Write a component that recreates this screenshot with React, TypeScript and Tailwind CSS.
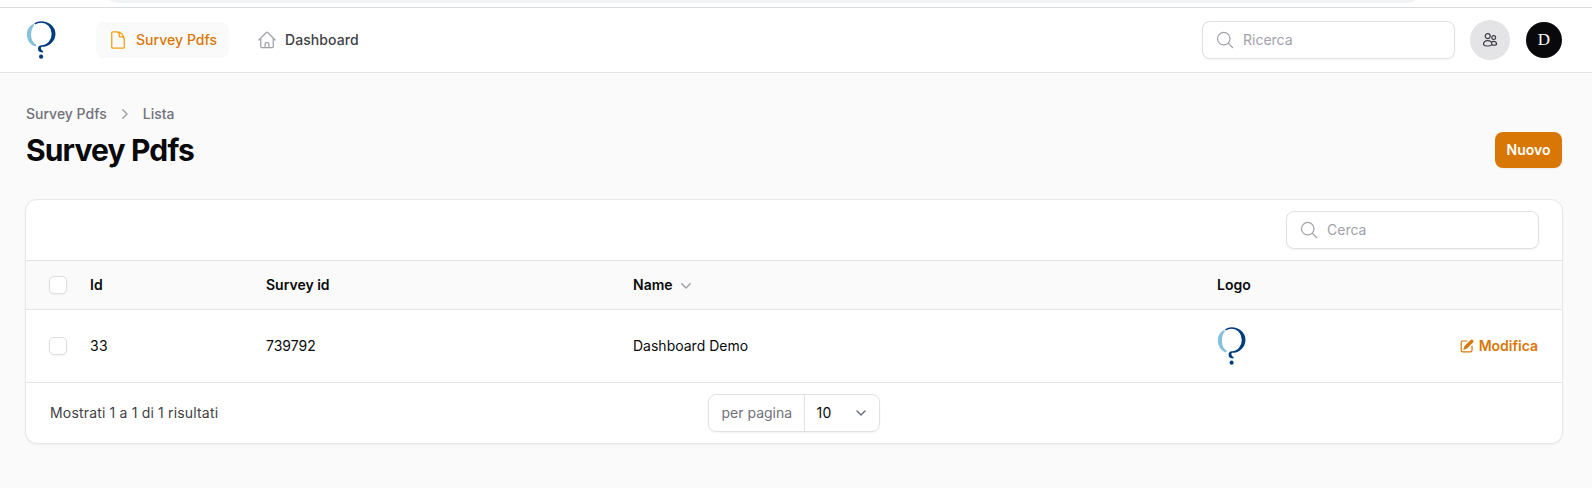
import React from "react";
import {
  HiOutlineDocument,
  HiOutlineHome,
  HiOutlineMagnifyingGlass,
  HiMiniChevronDown,
  HiMiniChevronRight,
  HiMiniPencilSquare,
} from "react-icons/hi2";

function Logo({ className }: { className: string }) {
  return (
    <svg viewBox="0 0 30 40" preserveAspectRatio="none" className={`h-10 shrink-0 ${className}`}>
      <path
        d="M7.5 3.800C3.300 6 .9 9.800.9 14.400c0 5.600 3.200 10.100 8.600 12.200l.6-1.900C6.800 22.800 5.100 19.200 5.100 14.700c0-3.900 1-7.200 3-9.300z"
        fill="#84c1dc"
      />
      <path
        d="M8.400 3.200Q11.500 1.200 15 1.200A14.200 12.800 0 0 1 15.500 26.800Q14.800 27.200 14.900 28.600Q15.200 30.500 17 31V32.400Q12 32.800 12 28.600Q12 25.300 15.500 25.200A10.400 11.250 0 0 0 15 2.700Q12 2.700 9 4.600Z"
        fill="#003c80"
      />
      <circle cx="15.100" cy="36.700" r="2.100" fill="#003c80" />
    </svg>
  );
}

function PeopleIcon() {
  return (
    <svg viewBox="0 0 16 16" className="size-4" fill="none" stroke="currentColor" strokeWidth="1.200">
      <circle cx="5.700" cy="4.100" r="2.500" />
      <circle cx="11.700" cy="5.600" r="1.900" />
      <path
        d="M1.500 12.600C1.500 10.200 3.300 8.600 5.700 8.600s4.200 1.600 4.200 4C9.200 13.500 7.500 14 5.700 14s-3.500-.5-4.200-1.400zM9.900 13c1.800.4 3.500.1 4.700-.6 0-1.800-1.200-3-2.900-3-1 0-1.900.4-2.500 1.100"
        strokeLinejoin="round"
      />
    </svg>
  );
}

function SearchField({ label }: { label: string }) {
  return (
    <label className="flex h-[38px] w-[253px] items-center rounded-lg border border-[#e1e1e3] bg-white pl-3 shadow-xs">
      <HiOutlineMagnifyingGlass className="size-5 shrink-0 text-[#a1a1aa]" />
      <input
        type="text"
        placeholder={label}
        className="w-full bg-transparent pl-2 text-sm outline-none placeholder:text-[#a1a1aa]"
      />
    </label>
  );
}

function Checkbox() {
  return <span className="block size-[18px] rounded-[5px] border border-[#dedee0] bg-white shadow-xs" />;
}

const columns = "grid grid-cols-[64px_176px_367px_584px_1fr] items-center pr-6";

export default function App() {
  return (
    <div className="flex h-[488px] w-full flex-col overflow-hidden bg-[#fafafa] font-['Inter',sans-serif] text-sm text-[#09090b]">
      <div className="flex h-2 shrink-0 items-start overflow-hidden border-b border-[#dadce0] bg-white pr-[171px] pl-[104px]">
        <div className="-mt-[25px] h-7 w-full rounded-b-[14px] bg-[#f1f3f4]" />
      </div>

      <header className="flex h-[65px] shrink-0 items-center border-b border-[#e4e4e5] bg-white pr-[30px] pl-[26px]">
        <Logo className="w-[30px]" />
        <nav className="ml-10 flex items-center gap-4 font-medium">
          <a className="flex h-9 w-[133px] items-center gap-2 rounded-lg bg-[#fafafa] px-3 tracking-[0.04px] whitespace-nowrap text-[#d97706]">
            <HiOutlineDocument className="size-5 shrink-0 text-[#f59e0b]" />
            Survey Pdfs
          </a>
          <a className="flex h-9 items-center gap-2 px-3 tracking-[0.08px] text-[#3f3f46]">
            <HiOutlineHome className="size-5 text-[#a1a1aa]" />
            Dashboard
          </a>
        </nav>
        <div className="ml-auto flex items-center">
          <SearchField label="Ricerca" />
          <button className="ml-[15px] flex size-10 items-center justify-center rounded-full bg-[#e4e4e7] text-[#3f3f46]">
            <PeopleIcon />
          </button>
          <span className="ml-4 flex size-9 items-center justify-center rounded-full bg-[#09090b] font-['Liberation_Serif',serif] text-[17px] text-white">
            D
          </span>
        </div>
      </header>

      <main className="flex flex-col pt-[31px] pr-[29px] pl-[25px]">
        <nav className="flex h-5 items-center pl-px font-medium text-[#71717a]">
          <span>Survey Pdfs</span>
          <HiMiniChevronRight className="mr-[9px] ml-[7px] size-5 text-[#a1a1aa]" />
          <span>Lista</span>
        </nav>
        <div className="mt-2 flex h-9 items-center justify-between px-px">
          <h1 className="text-3xl font-bold tracking-[-0.85px]">Survey Pdfs</h1>
          <button className="h-9 w-[67px] rounded-lg bg-[#d97706] text-center font-semibold text-white shadow-xs">
            Nuovo
          </button>
        </div>

        <section className="mt-[31px] overflow-hidden rounded-xl border border-[#e7e7e8] bg-white shadow-xs">
          <div className="flex h-[60px] items-center justify-end pr-[23px]">
            <SearchField label="Cerca" />
          </div>

          <div className={`${columns} h-[50px] border-y border-[#e4e4e5] bg-[#fafafa] font-semibold`}>
            <div className="pl-[23px]">
              <Checkbox />
            </div>
            <span>Id</span>
            <span>Survey id</span>
            <span className="flex items-center gap-[3px]">
              Name
              <HiMiniChevronDown className="size-5 text-[#a1a1aa]" />
            </span>
            <span>Logo</span>
          </div>

          <div className={`${columns} h-[73px] border-b border-[#e4e4e5]`}>
            <div className="pl-[23px]">
              <Checkbox />
            </div>
            <span className="tracking-[0.3px]">33</span>
            <span>739792</span>
            <span>Dashboard Demo</span>
            <span className="flex items-center justify-between">
              <Logo className="w-[29px]" />
              <a className="flex items-center gap-1 font-semibold text-[#d97706]">
                <HiMiniPencilSquare className="size-4" />
                Modifica
              </a>
            </span>
          </div>

          <footer className="grid h-[60px] grid-cols-[682px_172px_1fr] items-center">
            <span className="pl-6 tracking-[0.170px] text-[#3f3f46]">Mostrati 1 a 1 di 1 risultati</span>
            <div className="flex h-[38px] items-stretch rounded-lg border border-[#e1e1e3] shadow-xs">
              <span className="flex w-[96px] items-center border-r border-[#e1e1e3] pl-[12.500px] text-[#71717a]">
                per pagina
              </span>
              <span className="flex flex-1 items-center justify-between pr-2 pl-[11.500px] tracking-[0.3px]">
                10
                <svg viewBox="0 0 20 20" className="size-5" fill="none">
                  <path
                    d="M6 8l4 4 4-4"
                    stroke="#6b7280"
                    strokeWidth="1.500"
                    strokeLinecap="round"
                    strokeLinejoin="round"
                  />
                </svg>
              </span>
            </div>
          </footer>
        </section>
      </main>
    </div>
  );
}
